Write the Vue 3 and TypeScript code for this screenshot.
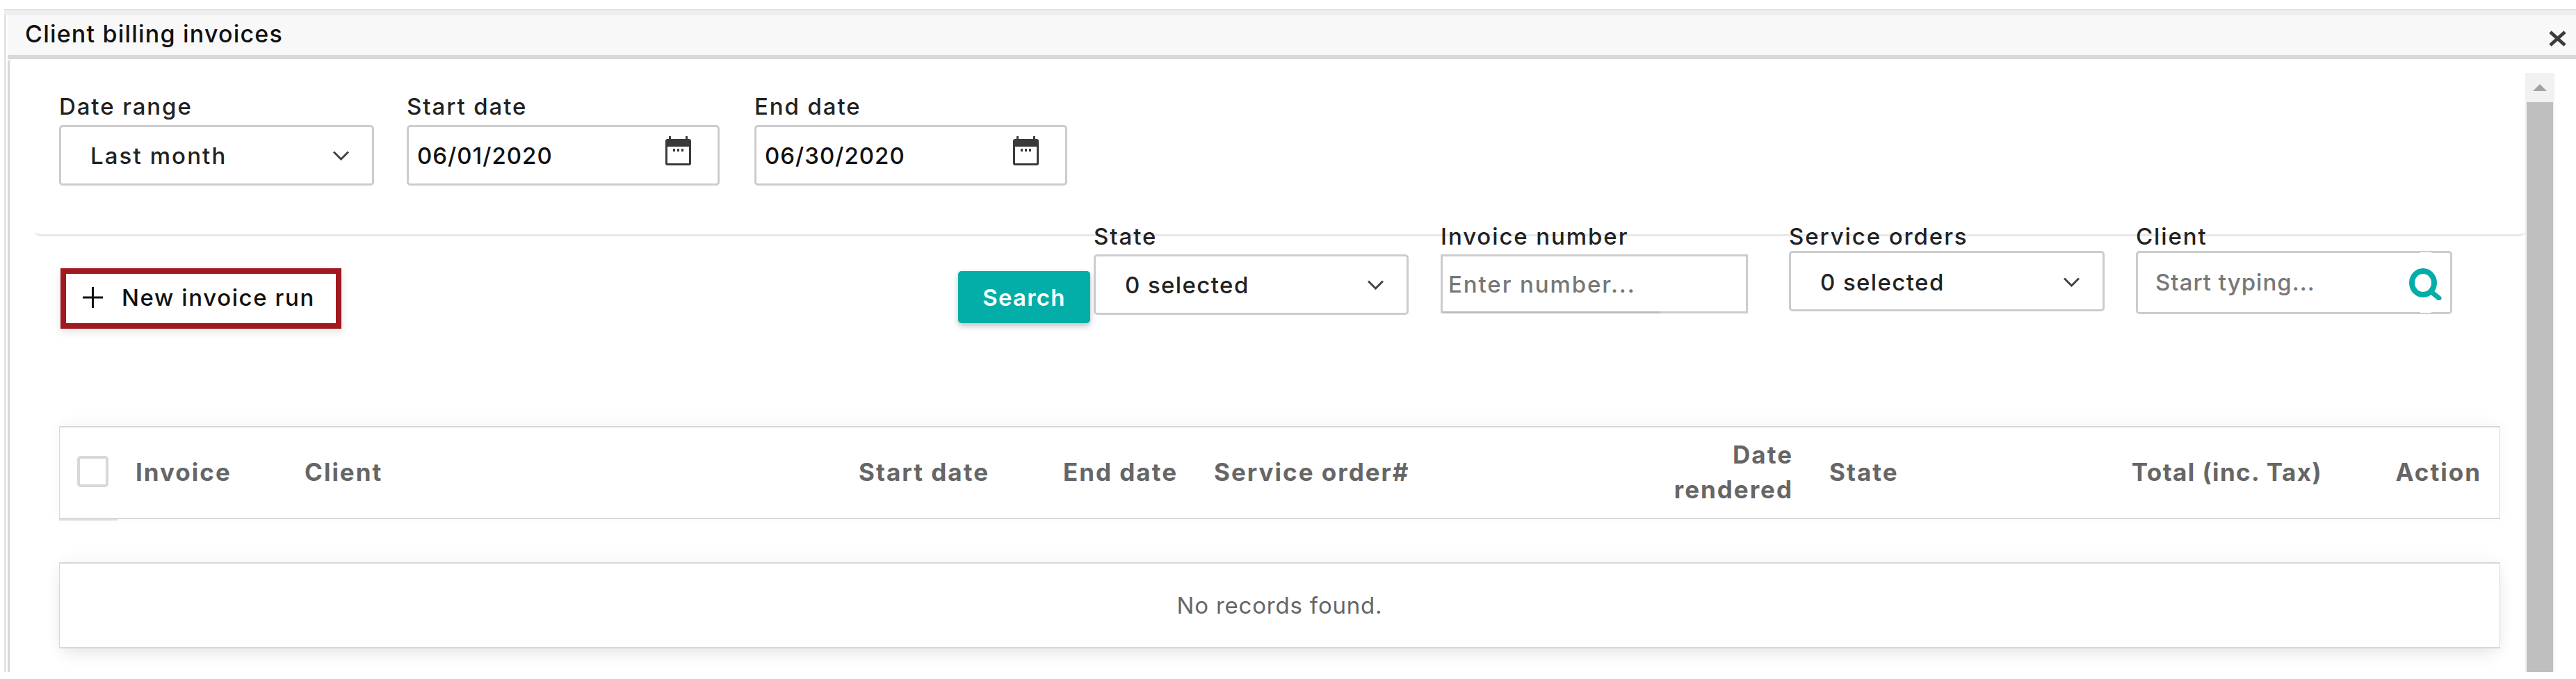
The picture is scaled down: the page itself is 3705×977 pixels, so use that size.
<script setup lang="ts">
interface Col { label: string; right?: boolean; tight?: boolean }
const columns: Col[] = [
  { label: 'Invoice' },
  { label: 'Client' },
  { label: 'Start date', right: true },
  { label: 'End date', right: true },
  { label: 'Service order#' },
  { label: 'Date rendered', right: true },
  { label: 'State' },
  { label: 'Total (inc. Tax)', right: true, tight: true },
  { label: 'Action', right: true },
]
</script>

<template>
  <div class="page">
    <div class="modal">
      <div class="topbar"></div>
      <header class="title">
        <span>Client billing invoices</span>
        <svg class="close" viewBox="0 0 27 23" width="27" height="23">
          <path d="M3 2 L24 21 M24 2 L3 21" stroke="#3c3c3c" stroke-width="5" fill="none" />
        </svg>
      </header>
      <div class="body">
        <div class="content">
          <section class="dates">
            <div class="field w453">
              <label>Date range</label>
              <div class="control select last">
                <span>Last month</span>
                <svg class="chev" viewBox="0 0 25 14" width="25" height="14"><path d="M2 1.5 L12.5 12 L23 1.5" /></svg>
              </div>
            </div>
            <div class="field w450 start">
              <label>Start date</label>
              <div class="control date">
                <span>06/01/2020</span>
                <svg class="cal" viewBox="0 0 37 42" width="37" height="42">
                  <path d="M5 0h3v5H5zM29 0h3v5h-3z" fill="#3a3a3a" />
                  <path d="M3 4h31a3 3 0 0 1 3 3v32a3 3 0 0 1-3 3H3a3 3 0 0 1-3-3V7a3 3 0 0 1 3-3zM3 15v24h31V15z" fill="#3a3a3a" fill-rule="evenodd" />
                  <path d="M11 18h3v4h-3zM17 18h3v4h-3zM23 18h3v4h-3z" fill="#3a3a3a" />
                </svg>
              </div>
            </div>
            <div class="field w450 end">
              <label>End date</label>
              <div class="control date">
                <span>06/30/2020</span>
                <svg class="cal" viewBox="0 0 37 42" width="37" height="42">
                  <path d="M5 0h3v5H5zM29 0h3v5h-3z" fill="#3a3a3a" />
                  <path d="M3 4h31a3 3 0 0 1 3 3v32a3 3 0 0 1-3 3H3a3 3 0 0 1-3-3V7a3 3 0 0 1 3-3zM3 15v24h31V15z" fill="#3a3a3a" fill-rule="evenodd" />
                  <path d="M11 18h3v4h-3zM17 18h3v4h-3zM23 18h3v4h-3z" fill="#3a3a3a" />
                </svg>
              </div>
            </div>
          </section>

          <section class="toolbar">
            <button class="new-run" type="button">
              <svg viewBox="0 0 29 30" width="29" height="30"><path d="M14.5 0v30M0 15h29" stroke="#111" stroke-width="3" fill="none" /></svg>
              <span>New invoice run</span>
            </button>
            <button class="search-btn" type="button">Search</button>
            <div class="field w453 f-state">
              <label>State</label>
              <div class="control select zero">
                <span>0 selected</span>
                <svg class="chev" viewBox="0 0 25 14" width="25" height="14"><path d="M2 1.5 L12.5 12 L23 1.5" /></svg>
              </div>
            </div>
            <div class="field f-invoice">
              <label>Invoice number</label>
              <div class="control number">
                <span>Enter number...</span>
                <i class="ink"></i>
              </div>
            </div>
            <div class="field w453 f-orders">
              <label>Service orders</label>
              <div class="control select zero">
                <span>0 selected</span>
                <svg class="chev" viewBox="0 0 25 14" width="25" height="14"><path d="M2 1.5 L12.5 12 L23 1.5" /></svg>
              </div>
            </div>
            <div class="field f-client">
              <label>Client</label>
              <div class="control client">
                <span>Start typing...</span>
                <svg class="mag" viewBox="0 0 47 46" width="47" height="46">
                  <ellipse cx="20" cy="21" rx="16" ry="17" fill="none" stroke="#03aea8" stroke-width="8" />
                  <path d="M33 35 L43 43" stroke="#03aea8" stroke-width="7" stroke-linecap="round" />
                </svg>
              </div>
            </div>
          </section>

          <section class="table">
            <div class="thead">
              <div class="th check"><span class="box"></span></div>
              <div v-for="c in columns" :key="c.label" class="th" :class="{ right: c.right, tight: c.tight }">{{ c.label }}</div>
              <i class="tick"></i>
            </div>
            <div class="empty">No records found.</div>
          </section>
        </div>
        <aside class="scrollbar">
          <div class="up"><i></i></div>
          <div class="thumb"></div>
        </aside>
      </div>
    </div>
  </div>
</template>

<style>
html, body { margin: 0; background: #fff; }
</style>

<style scoped>
.page {
  width: 3705px;
  height: 977px;
  padding: 13px 0 10px 6px;
  box-sizing: border-box;
  overflow: hidden;
  background: #fff;
  font-family: Inter, "Liberation Sans", sans-serif;
  color: #222;
}
.modal {
  height: 100%;
  display: flex;
  flex-direction: column;
  border-left: 3px solid #e4e4e4;
}
.topbar {
  height: 9px;
  box-sizing: border-box;
  margin-left: -3px;
  background: #eee;
  border-top: 1px solid #ddd;
}
.title {
  margin-left: 2px;
  height: 63px;
  box-sizing: border-box;
  padding: 0 13px 5px 25px;
  display: flex;
  align-items: center;
  justify-content: space-between;
  background: #f8f8f8;
  border-bottom: 6px solid #d8d8d8;
  font-size: 34px;
  letter-spacing: 1.2px;
  font-weight: 500;
  color: #111;
}
.close { margin-top: 14px; }
.body {
  margin-left: 2px;
  flex: 1;
  min-height: 0;
  display: flex;
  border-left: 3px solid #d8d8d8;
  border-top-left-radius: 6px;
  overflow: hidden;
}
.content { width: 3618px; flex: none; }
.dates {
  height: 255px;
  box-sizing: border-box;
  margin-left: 36px;
  padding: 48px 0 0 35px;
  display: flex;
  align-items: flex-start;
  border-bottom: 3px solid #e8e8e8;
  border-radius: 0 0 8px 8px;
}
.field { flex: none; display: flex; flex-direction: column; position: relative; }
.field label {
  height: 40px;
  line-height: 40px;
  font-size: 33px;
  letter-spacing: 1.9px;
  font-weight: 500;
  color: #222;
  white-space: nowrap;
}
.w453 { width: 453px; }
.w450 { width: 450px; }
.start { margin-left: 47px; }
.end { margin-left: 50px; }
.control {
  height: 87px;
  margin-top: 7px;
  box-sizing: border-box;
  border: 3px solid #ccc;
  border-radius: 5px;
  background: #fff;
  display: flex;
  align-items: center;
  justify-content: space-between;
  font-size: 33px;
  font-weight: 500;
  color: #222;
  white-space: nowrap;
  position: relative;
}
.select { padding: 0 32px 0 42px; }
.last { letter-spacing: 2.1px; }
.zero { letter-spacing: 1.4px; }
.chev path { fill: none; stroke: #444; stroke-width: 3; }
.date { padding: 0 38px 0 12px; color: #111; letter-spacing: 1px; }
.date .cal { margin-bottom: 13px; }
.toolbar {
  height: 273px;
  box-sizing: border-box;
  padding-left: 73px;
  display: flex;
  align-items: flex-start;
}
.new-run {
  width: 404px;
  height: 87px;
  margin-top: 46px;
  box-sizing: border-box;
  padding: 0 0 4px 24px;
  display: flex;
  align-items: center;
  gap: 27px;
  background: #fff;
  border: 8px solid #a01820;
  box-shadow: 0 4px 12px rgba(0, 0, 0, 0.12);
  font: 500 33px Inter, "Liberation Sans", sans-serif;
  letter-spacing: 1.6px;
  color: #111;
  white-space: nowrap;
}
.search-btn {
  width: 190px;
  height: 75px;
  margin: 50px 0 0 auto;
  padding: 0;
  border: 0;
  border-radius: 5px;
  background: #03aea8;
  color: #fff;
  font: 600 33px Inter, "Liberation Sans", sans-serif;
  letter-spacing: 1.2px;
  box-shadow: 0 4px 8px rgba(0, 0, 0, 0.25);
}
.f-state { margin: -20px 0 0 5px; }
.f-state .control { margin-top: 6px; }
.f-invoice { margin: -20px 0 0 46px; width: 442px; }
.f-invoice .control { margin-top: 6px; }
.number {
  height: 85px;
  border-radius: 0;
  padding: 0 0 0 8px;
  color: #777;
  letter-spacing: 1.9px;
}
.ink {
  position: absolute;
  left: 0;
  bottom: -3px;
  width: 312px;
  height: 3px;
  background: #bbb;
}
.f-orders { margin: -20px 0 0 59px; width: 454px; }
.f-orders .control { margin-top: 1px; padding-top: 3px; }
.f-client { margin: -20px 105px 0 45px; width: 455px; }
.f-client .control {
  height: 91px;
  margin-top: 1px;
  padding: 0 12px 2px 25px;
  color: #777;
  letter-spacing: 1px;
}
.client .mag { margin-top: 7px; }
.client::before,
.client::after {
  content: "";
  position: absolute;
  left: 406px;
  width: 16px;
  height: 1px;
  background: #fff;
}
.client::before { top: -1px; }
.client::after { bottom: -1px; }
.table { margin: 0 36px 0 71px; }
.thead {
  height: 134px;
  box-sizing: border-box;
  padding-bottom: 3px;
  display: grid;
  grid-template-columns: 83px 243px 600px 437px 271px 600px 285px 400px 361px 229px;
  align-items: center;
  background: #fff;
  border: 1px solid #d8d8d8;
  border-width: 2px 1px;
  box-shadow: 0 -4px 20px rgba(0, 0, 0, 0.04);
  position: relative;
}
.th {
  padding: 0 26px;
  font-size: 35px;
  letter-spacing: 2px;
  font-weight: 700;
  line-height: 50px;
  color: #666;
}
.th.right { text-align: right; }
.th.tight { letter-spacing: 1.4px; }
.check { padding: 0 0 0 25px; display: flex; }
.box {
  width: 45px;
  height: 45px;
  box-sizing: border-box;
  border: 4px solid #d8d8d8;
  border-radius: 5px;
}
.tick {
  position: absolute;
  left: -1px;
  bottom: -4px;
  width: 84px;
  height: 2px;
  background: #ddd;
}
.empty {
  height: 124px;
  margin-top: 62px;
  box-sizing: border-box;
  display: flex;
  align-items: center;
  justify-content: center;
  background: #fff;
  border: 1px solid #d8d8d8;
  border-width: 2px 1px;
  box-shadow: 0 12px 24px -6px rgba(0, 0, 0, 0.1), 0 -4px 20px rgba(0, 0, 0, 0.04);
  font-size: 33px;
  letter-spacing: 0.8px;
  font-weight: 400;
  color: #666;
}
.scrollbar {
  width: 42px;
  flex: none;
  margin-top: 20px;
  display: flex;
  flex-direction: column;
  background: #f1f1f1;
}
.up {
  height: 42px;
  flex: none;
  display: flex;
  align-items: center;
  justify-content: center;
}
.up i {
  width: 0;
  height: 0;
  border-left: 10px solid transparent;
  border-right: 10px solid transparent;
  border-bottom: 10px solid #a3a3a3;
}
.thumb { flex: 1; margin: 0 2px; background: #bfbfbf; }
</style>
